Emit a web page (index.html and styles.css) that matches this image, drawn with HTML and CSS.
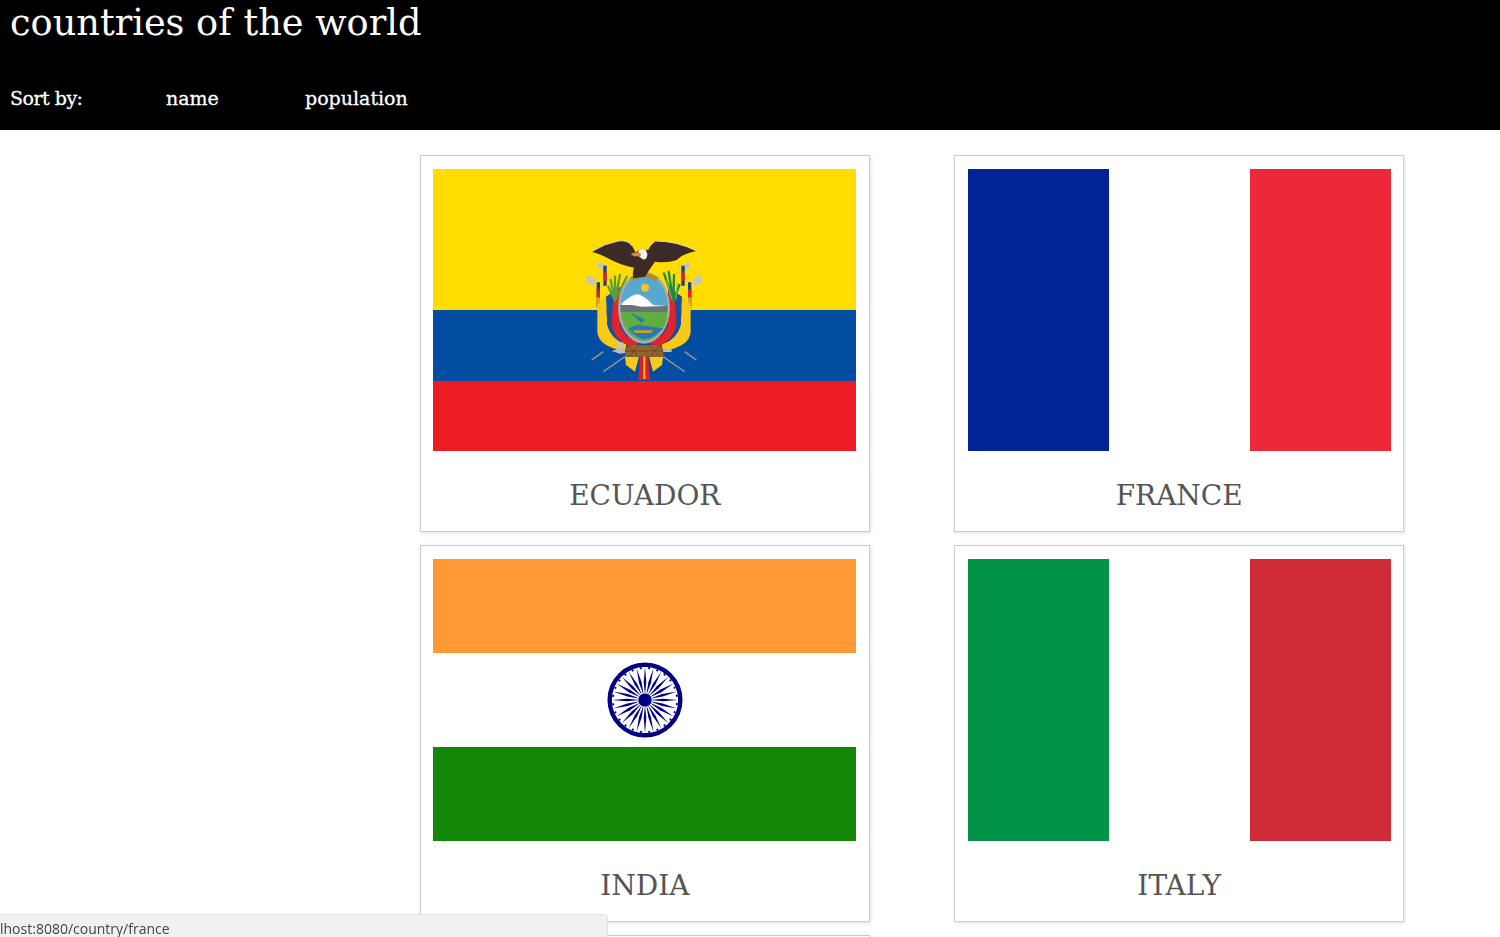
FILE: index.html
```html
<!DOCTYPE html>
<html lang="en">
<head>
  <meta charset="UTF-8">
  <title>countries of the world</title>
  <link rel="stylesheet" href="styles.css">
</head>
<body>
  <div id="h">
    <h1>countries of the world</h1>
    <div id="sort">
      <span class="sort-item sort-label">Sort by:</span>
      <a class="sort-item sort-name" href="#">name</a>
      <a class="sort-item" href="#">population</a>
    </div>
  </div>

  <div id="list">
    <div class="card">
      <div class="flag rows ecuador">
        <i class="s1"></i><i class="s2"></i><i class="s3"></i>
        <svg class="arms" viewBox="0 0 450 510">
          <defs>
            <g id="side">
              <!-- lances and flags -->
              <path d="M65 405L100 380M100 440L165 395" stroke="#8a8f96" stroke-width="5" fill="none"/>
              <path d="M52 150L76 162L72 186L60 176L48 178Z" fill="#c3c6c9"/>
              <path d="M85 110L110 122L102 138L92 130L84 132Z" fill="#c3c6c9"/>
              <path d="M80 172h10v75h-10zM100 122h10v60h-10z" fill="#1d3f8f"/>
              <path d="M80 192h10v25h-10zM100 142h10v25h-10z" fill="#d8232a"/>
              <path d="M80 217h10v30h-10z" fill="#d9a520"/>
              <!-- drapes -->
              <path d="M82 240L82 320Q85 365 165 378L170 358Q125 345 112 300L108 215Z" fill="#f7c919"/>
              <path d="M108 215L150 185L150 330L190 365L168 358Q125 345 112 300Z" fill="#1a4fa0"/>
              <path d="M130 225L150 185L150 300Q160 335 205 352L190 368Q125 345 125 285Z" fill="#e0242c"/>
              <!-- ribbon -->
              <path d="M165 395H207L195 440L168 420Z" fill="#f7c919"/>
            </g>
          </defs>
          <use href="#side"/>
          <use href="#side" transform="translate(444) scale(-1 1)"/>
          <!-- branches -->
          <g stroke-width="7" stroke-linecap="round" fill="none">
            <path d="M135 228L115 185M135 228L122 165M135 228L135 155M135 228L150 150M135 228L170 155M140 215L175 175" stroke="#5c9a3c"/>
            <path d="M310 228L282 145M310 228L296 140M310 228L312 150M310 228L328 180" stroke="#1f8a48"/>
            <path d="M305 222L289 165M318 222L322 170" stroke="#8fc04f" stroke-width="3"/>
          </g>
          <!-- oval shield -->
          <ellipse cx="222" cy="248" rx="78" ry="108" fill="#a8aba8"/>
          <ellipse cx="222" cy="248" rx="71" ry="100" fill="#57a8cf"/>
          <path d="M155 235Q190 205 205 208Q225 215 250 240L288 243L292 270L152 270Z" fill="#fff"/>
          <path d="M152 240L185 240L215 245L292 243L292 265L152 262Z" fill="#6b7378"/>
          <path d="M152 260L292 262Q290 320 240 343Q222 350 205 343Q158 320 152 260Z" fill="#5fae3f"/>
          <path d="M180 262L225 285L205 300L280 310Q255 338 225 343Q195 338 175 310L215 295Z" fill="#2a78b8"/>
          <path d="M188 316h62l-8 8h-46z" fill="#c9a227"/>
          <circle cx="225" cy="188" r="12" fill="#eec52a"/>
          <path d="M180 158Q222 128 265 158L258 168Q222 145 188 168Z" fill="#b58a2e"/>
          <!-- fasces, axe and ribbon tail -->
          <path d="M165 395V372L180 360H265L280 372V395Z" fill="#94632a"/>
          <path d="M165 378H280M178 362L205 395M205 362L178 395M240 362L268 395M268 362L240 395" stroke="#5f3d18" stroke-width="2" fill="none"/>
          <path d="M125 378L150 370L165 372V384L150 386ZM280 373H305V381H280Z" fill="#b9bcc0"/>
          <path d="M140 352H160L154 372H146Z" fill="#c3c6c9"/>
          <path d="M210 395H235L241 465H205Z" fill="#d9202a"/>
          <path d="M220 395H226V462H220Z" fill="#f2c01e"/>
          <!-- eagle -->
          <path d="M65 80Q105 55 145 48Q172 44 186 62L197 82Q212 70 235 75Q240 60 258 48Q320 48 380 78Q340 85 320 105Q290 115 255 110Q240 130 225 155L190 160Q186 140 192 128Q150 120 105 95Q85 85 65 80Z" fill="#3b2a26"/>
          <path d="M65 80Q105 55 145 48Q172 44 186 62M258 48Q320 48 380 78" stroke="#d8d4cc" stroke-width="3" fill="none"/>
          <path d="M205 78Q228 62 232 88Q232 102 222 104Q210 98 205 92Z" fill="#f4f2ee"/>
          <path d="M182 88Q195 78 212 84L212 94L192 94Z" fill="#d88a3c"/>
        </svg>
      </div>
      <div class="name">ECUADOR</div>
    </div>

    <div class="card">
      <div class="flag cols france">
        <i class="s1"></i><i class="s2"></i><i class="s3"></i>
      </div>
      <div class="name">FRANCE</div>
    </div>

    <div class="card">
      <div class="flag rows india">
        <i class="s1"></i><i class="s2"></i><i class="s3"></i>
        <svg class="chakra" viewBox="-38 -38 76 76">
          <defs>
            <g id="sp">
              <path d="M0 -5L1.3 -18L0 -33L-1.3 -18Z"/>
              <circle cx="4.1" cy="-31.8" r="1.1"/>
            </g>
            <g id="quarter">
              <use href="#sp"/>
              <use href="#sp" transform="rotate(15)"/>
              <use href="#sp" transform="rotate(30)"/>
              <use href="#sp" transform="rotate(45)"/>
              <use href="#sp" transform="rotate(60)"/>
              <use href="#sp" transform="rotate(75)"/>
            </g>
          </defs>
          <circle r="35.3" fill="none" stroke="#000080" stroke-width="4.4"/>
          <circle r="6.6" fill="#000080"/>
          <g fill="#000080">
            <use href="#quarter"/>
            <use href="#quarter" transform="rotate(90)"/>
            <use href="#quarter" transform="rotate(180)"/>
            <use href="#quarter" transform="rotate(270)"/>
          </g>
        </svg>
      </div>
      <div class="name">INDIA</div>
    </div>

    <div class="card">
      <div class="flag cols italy">
        <i class="s1"></i><i class="s2"></i><i class="s3"></i>
      </div>
      <div class="name">ITALY</div>
    </div>

    <div class="card"></div>
  </div>

  <div id="status">lhost:8080/country/france</div>
</body>
</html>
```

FILE: styles.css
```css
* {
  margin: 0;
  padding: 0;
  box-sizing: border-box;
}

html, body {
  height: 937px;
  overflow: hidden;
}

body {
  background: #fff;
  font-family: "Roboto Slab", "DejaVu Serif", serif;
}

#h {
  height: 130px;
  background: #000;
  color: #fff;
  padding: 0 10px;
}

#h h1 {
  font-size: 36.7px;
  font-weight: normal;
  line-height: 46px;
}

#sort {
  display: flex;
  margin-top: 32px;
  font-size: 19px;
  line-height: 40px;
}

.sort-item {
  color: #fff;
  text-decoration: none;
  -webkit-text-stroke: 0.3px #fff;
}

.sort-label {
  width: 156px;
  letter-spacing: -0.5px;
}

.sort-name {
  width: 139px;
}

#list {
  display: grid;
  grid-template-columns: 449.6px 449.6px;
  column-gap: 84.8px;
  row-gap: 13px;
  padding: 25px 0 0 420px;
}

.card {
  height: 377px;
  padding: 13px 12.3px 0;
  border: 1px solid #ccc;
  box-shadow: 1px 1px 4px rgba(0, 0, 0, 0.12);
  background: #fff;
}

.flag {
  position: relative;
  display: flex;
  height: 282px;
}

.rows {
  flex-direction: column;
}

.flag i {
  display: block;
  flex: 1;
}

.name {
  margin-top: 26px;
  text-align: center;
  font-size: 28px;
  line-height: 38px;
  color: #555;
}

.ecuador .s1 {
  flex: 2;
  background: #ffdd00;
}
.ecuador .s2 {
  background: #034ea2;
}
.ecuador .s3 {
  background: #ed1c24;
}

.france .s1 {
  background: #002395;
}
.france .s2 {
  background: #fff;
}
.france .s3 {
  background: #ed2939;
}

.india .s1 {
  background: #ff9933;
}
.india .s2 {
  background: #fff;
}
.india .s3 {
  background: #138808;
}

.italy .s1 {
  background: #009246;
}
.italy .s2 {
  background: #fff;
}
.italy .s3 {
  background: #ce2b37;
}

.arms {
  position: absolute;
  left: 137px;
  top: 56px;
  width: 150px;
  height: 170px;
  filter: blur(0.5px);
}

.chakra {
  position: absolute;
  left: 173.5px;
  top: 103px;
  width: 76px;
  height: 76px;
  filter: blur(0.4px);
}

#status {
  position: fixed;
  left: 0;
  bottom: 0;
  width: 608px;
  height: 23px;
  padding-top: 5px;
  background: #f1f1f1;
  border: 1px solid #e2e2e2;
  border-width: 1px 1px 0 0;
  border-top-right-radius: 5px;
  color: #444;
  font-family: "Open Sans", sans-serif;
  font-size: 14px;
  line-height: 18px;
  white-space: nowrap;
}
```
